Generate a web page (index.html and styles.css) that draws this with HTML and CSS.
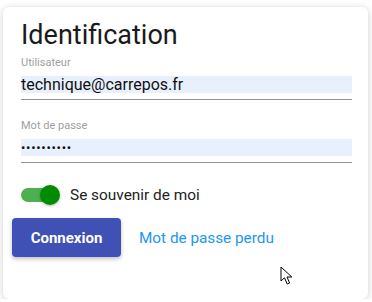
FILE: index.html
```html
<!DOCTYPE html>
<html lang="fr">
<head>
  <meta charset="UTF-8" />
  <meta name="viewport" content="width=device-width, initial-scale=1" />
  <title>Identification</title>
  <link rel="stylesheet" href="styles.css">
</head>
<body>

<div class="card">
  <h1 class="title">Identification</h1>

  <div class="field">
    <div class="field-label">Utilisateur</div>
    <div class="field-box">
      <div class="field-value">technique@carrepos.fr</div>
    </div>
  </div>

  <div class="field">
    <div class="field-label">Mot de passe</div>
    <div class="field-box">
      <div class="field-value dots">••••••••••</div>
    </div>
  </div>

  <div class="remember">
    <div class="switch">
      <div class="switch-track"></div>
      <div class="switch-knob"></div>
    </div>
    <span>Se souvenir de moi</span>
  </div>

  <div class="actions">
    <button class="btn-login">Connexion</button>
    <a class="lost-link" href="#">Mot de passe perdu</a>
  </div>

  <svg class="cursor" width="13" height="20" viewBox="0 0 13 20">
    <path d="M1 1 L1 15 L4.5 11.8 L7.2 18 L9.6 17 L7 11 L11.8 11 Z" fill="#fff" stroke="#000" stroke-width="1" stroke-linejoin="round"/>
  </svg>
</div>

</body>
</html>
```

FILE: styles.css
```css
body {
  margin: 0;
  padding: 7px 4px 0 3px;
  background: #fff;
  font-family: Roboto, "Liberation Sans", sans-serif;
}
.card {
  position: relative;
  width: 365px;
  box-sizing: border-box;
  padding: 11px 16px 42px 18px;
  background: #fff;
  border-radius: 6px;
  box-shadow: 0 1px 7px rgba(0, 0, 0, 0.2);
}
.title {
  margin: 0;
  font-size: 27px;
  font-weight: 400;
  line-height: 34px;
  color: #1a1a1a;
}
.field {
  margin-top: 4px;
}
.field + .field {
  margin-top: 19px;
}
.field-label {
  font-size: 11px;
  line-height: 13px;
  color: #9e9e9e;
}
.field-box {
  margin-top: 7px;
  padding-bottom: 6px;
  border-bottom: 1px solid #949494;
}
.field-value {
  height: 17px;
  background: #e8f0fe;
  font-size: 16px;
  line-height: 17px;
  color: #111;
}
.dots {
  font-size: 13px;
  letter-spacing: 0.7px;
}
.remember {
  display: flex;
  align-items: center;
  gap: 9px;
  margin-top: 21px;
  height: 22px;
  font-size: 15.4px;
  color: #222;
}
.switch {
  position: relative;
  width: 40px;
  height: 22px;
}
.switch-track {
  position: absolute;
  left: 0;
  top: 4px;
  width: 34px;
  height: 14px;
  border-radius: 7px;
  background: #4caf50;
}
.switch-knob {
  position: absolute;
  left: 19px;
  top: 1px;
  width: 20px;
  height: 20px;
  border-radius: 50%;
  background: #008c00;
  box-shadow: 0 1px 3px rgba(0, 0, 0, 0.3);
}
.actions {
  display: flex;
  align-items: center;
  margin: 12px 0 0 -9px;
}
.btn-login {
  height: 39px;
  width: 109px;
  border: none;
  border-radius: 4px;
  background: #3f51b5;
  color: #fff;
  font-family: inherit;
  font-size: 15px;
  font-weight: 700;
  box-shadow: 0 2px 4px rgba(0, 0, 0, 0.25);
  cursor: pointer;
}
.lost-link {
  margin-left: 18px;
  font-size: 15.3px;
  color: #2196f3;
  text-decoration: none;
}
.cursor {
  position: absolute;
  left: 277px;
  top: 259px;
}
```
